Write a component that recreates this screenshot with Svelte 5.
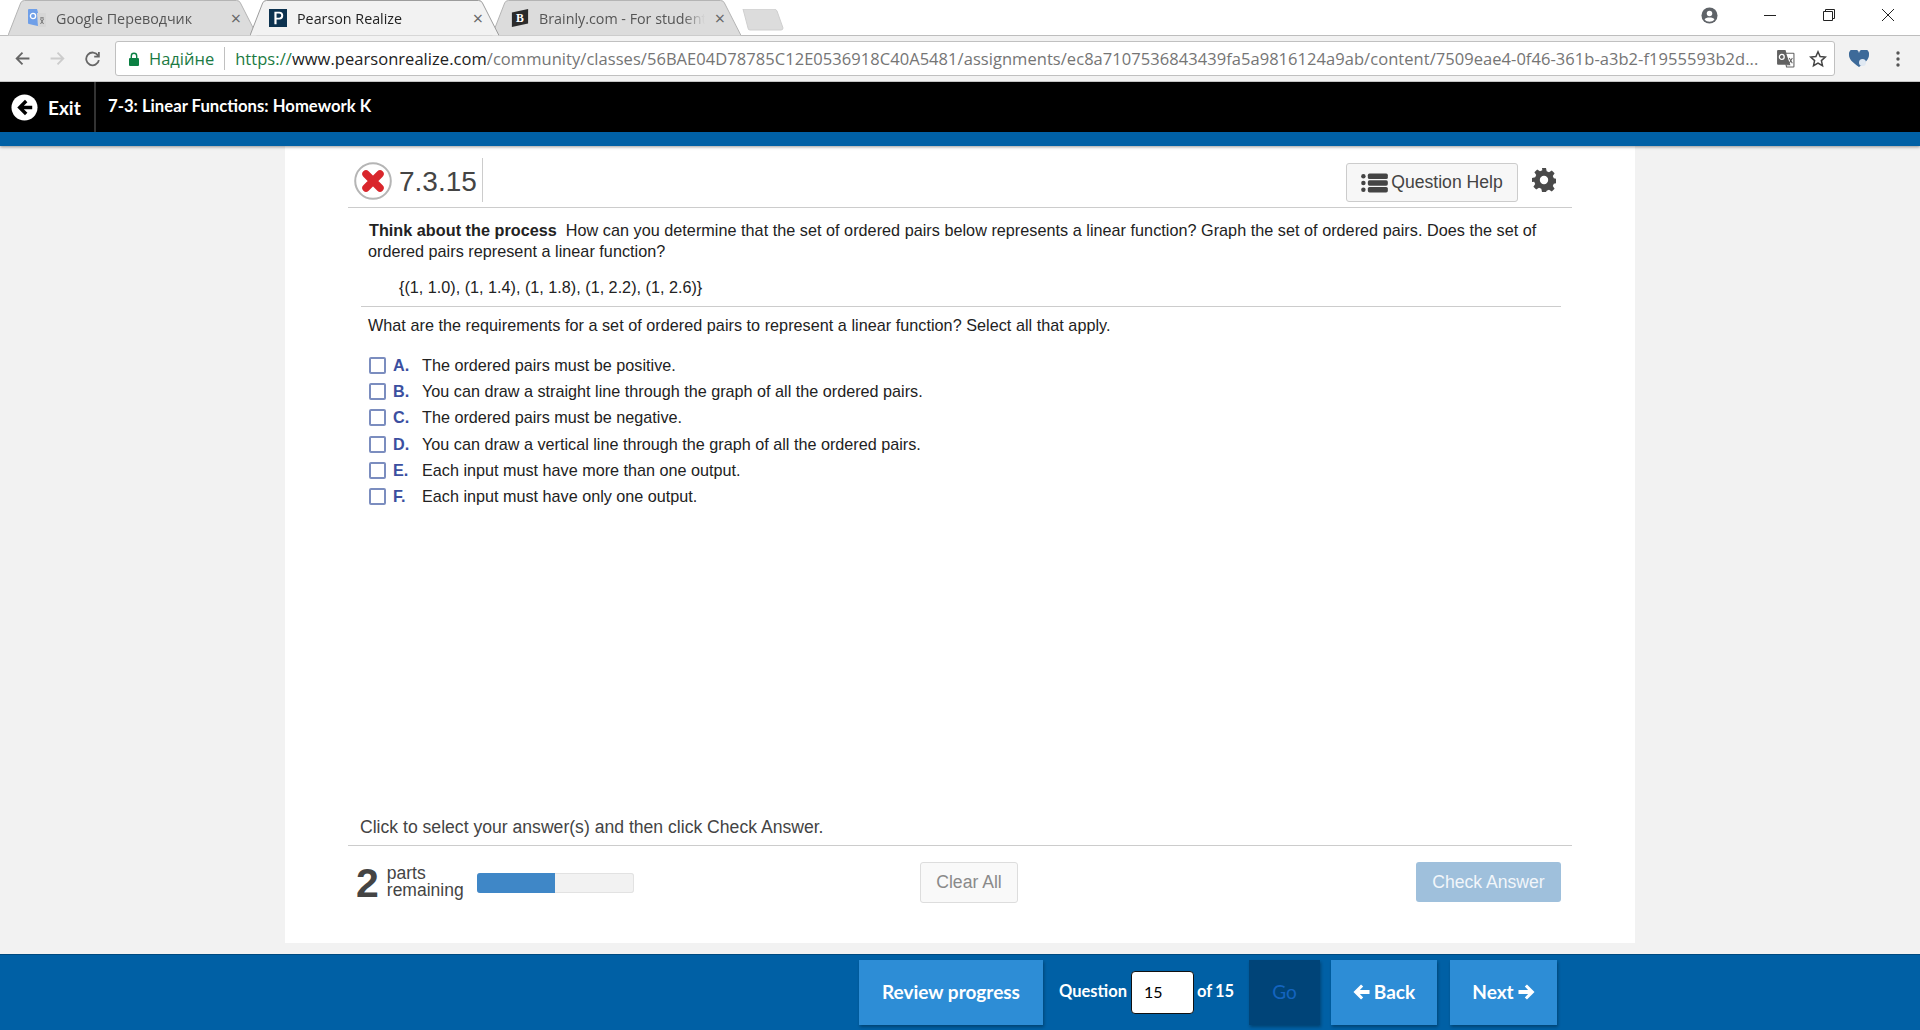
<script>
  const tabs = [
    { name: "Google Переводчик", icon: "google", active: false },
    { name: "Pearson Realize", icon: "pearson", active: true },
    { name: "Brainly.com - For students", icon: "brainly", active: false },
  ];

  const options = [
    { key: "A.", text: "The ordered pairs must be positive." },
    { key: "B.", text: "You can draw a straight line through the graph of all the ordered pairs." },
    { key: "C.", text: "The ordered pairs must be negative." },
    { key: "D.", text: "You can draw a vertical line through the graph of all the ordered pairs." },
    { key: "E.", text: "Each input must have more than one output." },
    { key: "F.", text: "Each input must have only one output." },
  ];
</script>

<div class="page">
  <div class="tabstrip">
    <div class="tabs">
      {#each tabs as tab}
        <div class="tab" class:active={tab.active}>
          <svg class="tabshape" viewBox="0 0 256 36" preserveAspectRatio="none">
            <path d="M0 35.5 L13 3 Q14 .5 17 .5 L235 .5 Q238 .5 239 3 L256 35.5" />
          </svg>
          {#if tab.icon === "google"}
            <svg class="favicon" viewBox="0 0 18 18">
              <path d="M0 1 Q0 0 1 0 L9 0 L14 18 L1 15 Q0 15 0 14Z" fill="#6f9fe8" />
              <path d="M9 4 L17 4 Q18 4 18 5 L18 17 Q18 18 17 18 L10 18 Z" fill="#d6d6d6" />
              <circle cx="5" cy="7" r="2.6" fill="none" stroke="#fff" stroke-width="1.3" />
              <path d="M12 9h4M14 8v1M12.5 15l3-5M12.5 10l3 5" stroke="#777" stroke-width="1" fill="none" />
            </svg>
          {:else if tab.icon === "pearson"}
            <svg class="favicon" viewBox="0 0 20 20">
              <rect width="20" height="20" fill="#0d3350" />
              <path d="M6 3h5.5a4.2 4.2 0 0 1 0 8.6H8.4V17H6Zm2.4 2v4.6h2.9a2.3 2.3 0 0 0 0-4.6Z" fill="#fff" />
            </svg>
          {:else}
            <svg class="favicon" viewBox="0 0 20 20">
              <path d="M1 4 L19 0 V16 L1 20Z" fill="#2b2b2b" />
              <text x="10" y="14.5" text-anchor="middle" class="brainly-b">B</text>
            </svg>
          {/if}
          <span class="tabname">{tab.name}</span>
          <span class="tabclose">×</span>
        </div>
      {/each}
      <svg class="newtab" viewBox="0 0 42 22"><path d="M1 0 H32 Q34 0 35 2 L41 19 Q41 21 39 21 H8 Q6 21 6 19 Z" /></svg>
    </div>
    <div class="winctrls">
      <svg class="profile" viewBox="0 0 18 18">
        <circle cx="9" cy="9" r="8.5" fill="#5f6368" />
        <circle cx="9" cy="6.8" r="2.9" fill="#fff" />
        <path d="M3.8 13 C5 10.6 13 10.6 14.2 13 C13 15 11 15.6 9 15.6 S5 15 3.8 13Z" fill="#fff" />
      </svg>
      <svg class="winbtn" viewBox="0 0 14 14"><path d="M1 7.5h12" stroke="#222" fill="none" /></svg>
      <svg class="winbtn" viewBox="0 0 14 14"><path d="M1.5 3.5h9v9h-9zM3.5 3.5v-2h9v9h-2" stroke="#222" fill="none" /></svg>
      <svg class="winbtn" viewBox="0 0 14 14"><path d="M1 1l12 12M13 1L1 13" stroke="#222" fill="none" /></svg>
    </div>
  </div>

  <div class="toolbar">
    <div class="navbtns">
      <svg viewBox="0 0 16 16"><path d="M14.5 8H2.5M8 2.5L2.5 8 8 13.5" stroke="#666" stroke-width="1.7" fill="none" /></svg>
      <svg viewBox="0 0 16 16"><path d="M1.5 8h12M8 2.5L13.5 8 8 13.5" stroke="#ccc" stroke-width="1.7" fill="none" /></svg>
      <svg viewBox="0 0 16 16"><path d="M13.2 5.2A6 6 0 1 0 14 9.5M14 1.8v4.4H9.6" stroke="#666" stroke-width="1.7" fill="none" /></svg>
    </div>
    <div class="omnibox">
      <svg class="lock" viewBox="0 0 12 14">
        <path d="M3.3 6V4a2.7 2.7 0 0 1 5.4 0v2" fill="none" stroke="#0b8043" stroke-width="1.4" />
        <rect x="1" y="6" width="10" height="8" rx="1" fill="#0b8043" />
      </svg>
      <span class="secure">Надійне</span>
      <span class="url"><span class="scheme">https://</span><span class="host">www.pearsonrealize.com</span>/community/classes/56BAE04D78785C12E0536918C40A5481/assignments/ec8a7107536843439fa5a9816124a9ab/content/7509eae4-0f46-361b-a3b2-f1955593b2d...</span>
      <svg class="translate" viewBox="0 0 18 18">
        <path d="M1 2 Q1 1 2 1 H9 L13 15 H2 Q1 15 1 14Z" fill="#616161" />
        <path d="M9 4H16.500 Q17 4 17 4.500 V16.500 Q17 17 16.500 17 H10 L9.500 15 H13 Z" fill="#fff" stroke="#616161" />
        <circle cx="5.500" cy="7.500" r="2.300" fill="none" stroke="#fff" stroke-width="1.200" />
        <path d="M12.500 8.500l3 5M15.500 8.500l-3 5" stroke="#616161" fill="none" />
      </svg>
      <svg class="star" viewBox="0 0 18 18">
        <path d="M9 1.800l2.100 4.800 5.200.5-3.900 3.500 1.100 5.100L9 13.100l-4.500 2.600 1.100-5.100-3.900-3.500 5.200-.5Z" fill="none" stroke="#444" stroke-width="1.500" />
      </svg>
    </div>
    <svg class="heart" viewBox="0 0 20 18">
      <path d="M10 17 C3 12 0 9 0 5 A5 5 0 0 1 10 3 A5 5 0 0 1 20 5 C20 9 17 12 10 17Z" fill="#3d6a99" />
      <circle cx="13.500" cy="12.500" r="3.500" fill="#dfe8f2" />
    </svg>
    <svg class="kebab" viewBox="0 0 4 18">
      <circle cx="2" cy="3" r="1.700" fill="#555" />
      <circle cx="2" cy="9" r="1.700" fill="#555" />
      <circle cx="2" cy="15" r="1.700" fill="#555" />
    </svg>
  </div>

  <header class="topbar">
    <div class="exit">
      <svg viewBox="0 0 28 28">
        <circle cx="14" cy="14" r="13.500" fill="#fff" />
        <path d="M14.500 6 L6.500 14 L14.500 22 L17 19.500 L13.300 15.800 H22 V12.200 H13.300 L17 8.500 Z" fill="#000" />
      </svg>
      <span>Exit</span>
    </div>
    <div class="hwtitle">7-3: Linear Functions: Homework K</div>
  </header>
  <div class="bluestrip"></div>

  <main class="main">
    <section class="card">
      <div class="qhead">
        <svg class="wrong" viewBox="0 0 38 38">
          <circle cx="19" cy="19" r="17.800" fill="#fff" stroke="#b5b5b5" stroke-width="2" />
          <path d="M12 12 L26 26 M26 12 L12 26" stroke="#d9262c" stroke-width="7.500" stroke-linecap="round" />
        </svg>
        <span class="qnum">7.3.15</span>
        <button class="help">
          <svg viewBox="0 0 24 18">
            <circle cx="2" cy="3" r="2" fill="#444" />
            <circle cx="2" cy="9" r="2" fill="#444" />
            <circle cx="2" cy="15" r="2" fill="#444" />
            <rect x="6" y=".5" width="18" height="5" rx="1.500" fill="#444" />
            <rect x="6" y="6.500" width="18" height="5" rx="1.500" fill="#444" />
            <rect x="6" y="12.500" width="18" height="5" rx="1.500" fill="#444" />
          </svg>
          Question Help
        </button>
        <svg class="gear" viewBox="0 0 24 24">
          <path fill-rule="evenodd" fill="#4a4a4a" d="M10 0h4l.7 3.200 2.300 1 2.800-1.800 2.800 2.800-1.800 2.800 1 2.300 3.200.7v4l-3.200.7-1 2.300 1.800 2.800-2.800 2.800-2.800-1.800-2.300 1L14 24h-4l-.7-3.200-2.300-1-2.800 1.800-2.800-2.800 1.800-2.800-1-2.300L0 14v-4l3.200-.7 1-2.300L2.400 4.200l2.800-2.800L8 3.200l2.300-1ZM12 7.800a4.200 4.200 0 1 0 0 8.400 4.200 4.200 0 0 0 0-8.400Z" />
        </svg>
      </div>

      <div class="stem">
        <p class="prompt"><b>Think about the process</b>&nbsp; How can you determine that the set of ordered pairs below represents a linear function? Graph the set of ordered pairs. Does the set of ordered pairs represent a linear function?</p>
        <p class="pairs">{"{"}(1, 1.0), (1, 1.4), (1, 1.8), (1, 2.2), (1, 2.6){"}"}</p>
      </div>
      <div class="part">
        <p class="ask">What are the requirements for a set of ordered pairs to represent a linear function? Select all that apply.</p>
        <ul class="options">
          {#each options as opt}
            <li>
              <span class="check"></span>
              <span class="key">{opt.key}</span>
              <span>{opt.text}</span>
            </li>
          {/each}
        </ul>
      </div>

      <div class="hint">Click to select your answer(s) and then click Check Answer.</div>
      <div class="actions">
        <div class="remaining">
          <span class="count">2</span>
          <span class="partslabel">parts<br />remaining</span>
          <div class="progress"><div class="fill" style="width: 50%"></div></div>
        </div>
        <button class="clear">Clear All</button>
        <button class="checkanswer">Check Answer</button>
      </div>
    </section>
  </main>

  <footer class="navbar">
    <button class="navbtn review">Review progress</button>
    <div class="qjump"><span>Question</span> <input value="15" /> <span>of 15</span></div>
    <button class="navbtn go">Go</button>
    <button class="navbtn back">
      <svg viewBox="0 0 18 16"><path d="M8.500 0 L0.500 8 L8.500 16 L10.800 13.700 L7.300 10 H17.500 V6 H7.300 L10.800 2.300 Z" fill="#fff" /></svg>
      Back
    </button>
    <button class="navbtn next">
      Next
      <svg viewBox="0 0 18 16"><path d="M9.500 0 L17.500 8 L9.500 16 L7.200 13.700 L10.700 10 H0.500 V6 H10.700 L7.200 2.300 Z" fill="#fff" /></svg>
    </button>
  </footer>
</div>

<style>
  :global(body) {
    margin: 0;
    background: #f2f2f2;
  }
  p {
    margin: 0;
  }
  button {
    font-family: inherit;
    cursor: pointer;
  }
  .page {
    height: 1030px;
    display: flex;
    flex-direction: column;
    overflow: hidden;
    font-family: "Liberation Sans", Arial, sans-serif;
  }

  /* browser chrome */
  .tabstrip {
    height: 36px;
    flex-shrink: 0;
    display: flex;
    justify-content: space-between;
    background: #fff;
    box-sizing: border-box;
    border-bottom: 1px solid #bdbdbd;
  }
  .tabs {
    display: flex;
    padding-left: 8px;
  }
  .tab {
    position: relative;
    width: 249px;
    height: 36px;
    margin-right: -7px;
    box-sizing: border-box;
    padding: 0 16px 0 19px;
    display: flex;
    align-items: center;
    gap: 10px;
    font-family: "Open Sans", sans-serif;
    font-size: 14.300px;
    color: #555;
  }
  .tab:first-child {
    padding-left: 20px;
  }
  .tab.active {
    z-index: 1;
    color: #222;
  }
  .tabshape {
    position: absolute;
    inset: 0;
    width: 100%;
    height: 100%;
  }
  .tabshape path {
    fill: #dcdcdc;
    stroke: #b3b3b3;
    stroke-width: 1;
  }
  .active .tabshape path {
    fill: #f2f2f2;
    stroke: #9a9a9a;
  }
  .favicon {
    position: relative;
    width: 18px;
    height: 18px;
    flex-shrink: 0;
  }
  .brainly-b {
    font-family: "Liberation Serif", serif;
    font-weight: 700;
    font-size: 13px;
    fill: #fff;
  }
  .tabname {
    position: relative;
    flex: 1;
    white-space: nowrap;
    overflow: hidden;
    mask-image: linear-gradient(to left, transparent, #000 22px);
  }
  .tabclose {
    position: relative;
    font-size: 18px;
    color: #666;
    line-height: 1;
  }
  .newtab {
    width: 42px;
    height: 22px;
    margin: 9px 0 0 8px;
    fill: #dcdcdc;
    stroke: #cfcfcf;
  }
  .winctrls {
    display: flex;
    align-items: center;
    height: 30px;
    padding-right: 25px;
    gap: 45px;
  }
  .profile {
    width: 17px;
    height: 17px;
  }
  .winbtn {
    width: 14px;
    height: 14px;
  }
  .toolbar {
    height: 46px;
    flex-shrink: 0;
    display: flex;
    align-items: center;
    background: #f2f2f2;
    box-sizing: border-box;
    border-bottom: 1px solid #c4c4c4;
    padding: 0 15px 0 14px;
  }
  .navbtns {
    display: flex;
    gap: 18px;
    width: 101px;
  }
  .navbtns svg {
    width: 17px;
    height: 17px;
  }
  .omnibox {
    width: 1720px;
    height: 35px;
    box-sizing: border-box;
    background: #fff;
    border: 1px solid #c0c0c0;
    border-radius: 3px;
    display: flex;
    align-items: center;
    padding: 0 7px 0 12px;
    font-family: "Open Sans", sans-serif;
    font-size: 16.500px;
    white-space: nowrap;
  }
  .lock {
    width: 12px;
    height: 14px;
    margin-right: 9px;
  }
  .secure {
    color: #1b7a43;
    padding-right: 10px;
    margin-right: 10px;
    border-right: 1px solid #c0c0c0;
  }
  .url {
    color: #757575;
    flex: 1;
    letter-spacing: 0.05px;
  }
  .scheme {
    color: #1b7a43;
  }
  .host {
    color: #222;
  }
  .translate {
    width: 19px;
    height: 19px;
    margin-right: 14px;
  }
  .star {
    width: 18px;
    height: 18px;
  }
  .heart {
    width: 20px;
    height: 18px;
    margin-left: 14px;
  }
  .kebab {
    width: 4px;
    height: 18px;
    margin-left: 27px;
  }

  /* assignment bars */
  .topbar {
    height: 50px;
    flex-shrink: 0;
    background: #000;
    color: #fff;
    display: flex;
    align-items: stretch;
    font-family: Lato, sans-serif;
    font-weight: 700;
  }
  .exit {
    width: 96px;
    box-sizing: border-box;
    padding-left: 11px;
    display: flex;
    align-items: center;
    gap: 10px;
    font-size: 19px;
    border-right: 2px solid #333;
  }
  .exit svg {
    width: 27px;
    height: 27px;
  }
  .hwtitle {
    padding-left: 12px;
    font-size: 16.700px;
    line-height: 48px;
  }
  .bluestrip {
    height: 14px;
    flex-shrink: 0;
    background: #0060a5;
    box-shadow: 0 1px 3px rgba(0, 0, 0, 0.4);
    position: relative;
  }
  .main {
    flex: 1;
    display: flex;
    justify-content: center;
    min-height: 0;
    padding-bottom: 11px;
  }

  /* question card */
  .card {
    width: 1350px;
    box-sizing: border-box;
    padding: 0 63px;
    background: #fff;
    display: flex;
    flex-direction: column;
    color: #222;
    font-size: 16.200px;
  }
  .qhead {
    height: 62px;
    flex-shrink: 0;
    box-sizing: border-box;
    border-bottom: 1px solid #ccc;
    padding: 12px 0 5px 6px;
    display: flex;
    align-items: flex-start;
  }
  .wrong {
    width: 38px;
    height: 38px;
    margin-top: 4px;
  }
  .qnum {
    font-size: 28px;
    line-height: 44px;
    color: #444;
    height: 44px;
    padding: 2px 5px 0 7px;
    box-sizing: border-box;
    margin-right: auto;
    border-right: 1px solid #ccc;
  }
  .help {
    width: 172px;
    height: 39px;
    margin-top: 5px;
    padding: 0;
    display: flex;
    align-items: center;
    justify-content: center;
    gap: 3px;
    background: #f7f7f7;
    border: 1px solid #ccc;
    border-radius: 3px;
    color: #444;
    font-size: 17.600px;
    margin-right: 14px;
  }
  .help svg {
    width: 27px;
    height: 20px;
  }
  .gear {
    width: 24px;
    height: 24px;
    margin: 10px 16px 0 0;
  }
  .stem {
    margin: 0 11px 0 13px;
    padding: 12px 8px 8px 7px;
    border-bottom: 1px solid #ccc;
    line-height: 21px;
  }
  .prompt {
    width: 1195px;
    text-indent: 1px;
    letter-spacing: 0.03px;
  }
  .pairs {
    margin: 15px 0 0 31px;
  }
  .part {
    margin: 0 11px 0 21px;
    flex: 1;
    min-height: 0;
  }
  .ask {
    margin: 8px 0 0 -1px;
    line-height: 21px;
    letter-spacing: 0.03px;
  }
  .options {
    list-style: none;
    margin: 16px 0 0;
    padding: 0;
  }
  .options li {
    height: 26.300px;
    display: flex;
    align-items: center;
  }
  .check {
    width: 17px;
    height: 17px;
    box-sizing: border-box;
    background: #fff;
    border: 2px solid #7b8dbf;
    border-radius: 2px;
  }
  .key {
    width: 29px;
    margin-left: 7px;
    color: #3b4fa0;
    font-weight: 700;
  }
  .hint {
    padding: 0 0 6px 12px;
    font-size: 17.600px;
    line-height: 24px;
    color: #444;
    border-bottom: 1px solid #ccc;
  }
  .actions {
    height: 97px;
    flex-shrink: 0;
    display: flex;
    padding: 16px 11px 0 8px;
    box-sizing: border-box;
    align-items: flex-start;
  }
  .remaining {
    display: flex;
    width: 564px;
    align-items: flex-start;
  }
  .count {
    font-size: 41px;
    line-height: 42px;
    font-weight: 700;
    color: #444;
  }
  .partslabel {
    margin: 3px 0 0 8px;
    font-size: 17.500px;
    line-height: 17px;
    color: #444;
    width: 90px;
    flex-shrink: 0;
  }
  .progress {
    width: 157px;
    height: 20px;
    margin-top: 11px;
    background: #f2f2f2;
    border-radius: 3px;
    box-shadow: inset 0 0 0 1px #e2e2e2;
    overflow: hidden;
  }
  .fill {
    height: 100%;
    background: #3f87c7;
  }
  .clear {
    width: 98px;
    height: 41px;
    background: #f9f9f9;
    border: 1px solid #ddd;
    border-radius: 3px;
    font-size: 17.600px;
    color: #8a8a8a;
    margin-right: auto;
    padding: 0;
  }
  .checkanswer {
    width: 145px;
    height: 40px;
    background: #9fc0dc;
    border: none;
    border-radius: 3px;
    color: #f2f6fa;
    font-size: 17.600px;
    padding: 0;
  }

  /* footer nav */
  .navbar {
    height: 76px;
    flex-shrink: 0;
    box-sizing: border-box;
    background: #0060a5;
    border-top: 1px solid #004a80;
    padding: 5px 0 0 859px;
    display: flex;
    align-items: flex-start;
    font-family: Lato, sans-serif;
    color: #fff;
  }
  .navbtn {
    height: 65px;
    padding: 0 0 2px;
    border: none;
    background: #2d8dd6;
    color: #fff;
    font-size: 19px;
    font-weight: 700;
    box-shadow: 1px 2px 3px rgba(0, 0, 0, 0.3);
    display: flex;
    align-items: center;
    justify-content: center;
    gap: 4px;
  }
  .navbtn svg {
    width: 17px;
    height: 16px;
  }
  .review {
    width: 184px;
  }
  .qjump {
    height: 65px;
    width: 206px;
    box-sizing: border-box;
    padding-left: 16px;
    display: flex;
    align-items: center;
    gap: 3px;
    font-size: 16.500px;
    font-weight: 700;
  }
  .qjump span {
    margin-bottom: 4px;
    word-spacing: -1px;
  }
  .qjump input {
    width: 63px;
    height: 43px;
    margin-left: 1px;
    box-sizing: border-box;
    border: 1px solid #111;
    border-radius: 4px;
    padding: 0 11px 2px 12px;
    font-family: inherit;
    font-size: 16px;
    color: #000;
    font-weight: 400;
  }
  .go {
    width: 71px;
    background: #004478;
    color: #1464c0;
    font-weight: 400;
    margin-right: 11px;
  }
  .back {
    width: 106px;
    margin-right: 13px;
  }
  .next {
    width: 107px;
  }
</style>
